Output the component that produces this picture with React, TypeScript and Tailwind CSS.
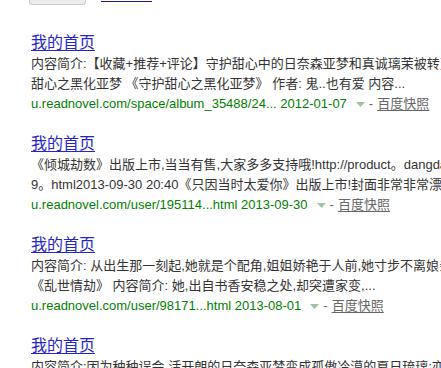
import React from 'react';

interface Result {
  lines: string[];
  url: string;
  date: string;
}

const results: Result[] = [
  {
    lines: [
      '内容简介:【收藏+推荐+评论】守护甜心中的日奈森亚梦和真诚璃茉被转变',
      '甜心之黑化亚梦 《守护甜心之黑化亚梦》 作者: 鬼..也有爱  内容...',
    ],
    url: 'u.readnovel.com/space/album_35488/24...',
    date: '2012-01-07',
  },
  {
    lines: [
      '《倾城劫数》出版上市,当当有售,大家多多支持哦!http://product。dangdang',
      '9。html2013-09-30 20:40《只因当时太爱你》出版上市!封面非常非常漂亮',
    ],
    url: 'u.readnovel.com/user/195114...html',
    date: '2013-09-30',
  },
  {
    lines: [
      '内容简介: 从出生那一刻起,她就是个配角,姐姐娇艳于人前,她寸步不离娘亲',
      '《乱世情劫》  内容简介: 她,出自书香安稳之处,却突遭家变,...',
    ],
    url: 'u.readnovel.com/user/98171...html',
    date: '2013-08-01',
  },
  {
    lines: [
      '内容简介:因为种种误会,活开朗的日奈森亚梦变成孤傲冷漠的夏日琉璃;亦',
      '',
    ],
    url: '',
    date: '',
  },
];

const font = "font-['Liberation_Sans','Noto_Sans_CJK_SC',sans-serif]";

const ResultItem: React.FC<{ item: Result }> = ({ item }) => (
  <div className="mb-[19px]">
    <a className="block h-[22px] text-[16px] leading-[22px] text-[#2626c8] underline underline-offset-2">
      我的首页
    </a>
    {item.lines.map((line, i) => (
      <div key={i} className="h-[20px] text-[13px] leading-[20px] text-[#333]">
        {line}
      </div>
    ))}
    {item.url && (
      <div className="flex items-center h-[20px] text-[13px] leading-[20px]">
        <span className="text-[#008000]">{item.url} {item.date}</span>
        <svg width="9" height="5" viewBox="0 0 9 5" className="ml-[9px]">
          <path d="M0 0 L9 0 L4.5 5 Z" fill="#9fc29f" />
        </svg>
        <span className="ml-[4px] text-[#666]">-</span>
        <span className="ml-[4px] text-[#666] underline underline-offset-2">百度快照</span>
      </div>
    )}
  </div>
);

export default function App() {
  return (
    <div className={`w-[441px] h-[368px] overflow-hidden bg-white whitespace-nowrap ${font}`}>
      {/* partial header above */}
      <div className="flex h-[5px] pl-[29px]">
        <div className="w-[57px] h-[5px] bg-[#ececec] border border-t-0 border-[#c8c8c8] rounded-b-[4px]" />
        <div className="ml-[15px] mt-[1px] w-[51px] h-[1px] bg-[#1a1a8c]" />
      </div>
      <div className="pl-[31px] pt-[27px]">
        {results.map((r, i) => (
          <ResultItem key={i} item={r} />
        ))}
      </div>
    </div>
  );
}
